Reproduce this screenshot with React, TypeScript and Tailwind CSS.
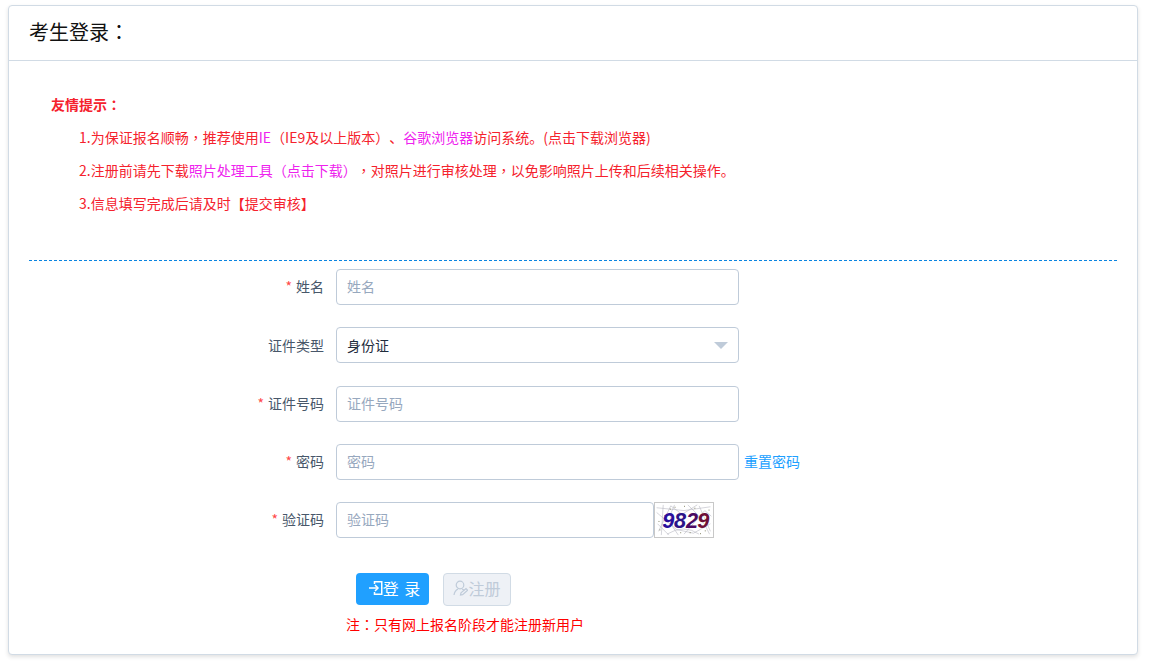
const font = { fontFamily: '"Noto Sans CJK SC", "Liberation Sans", sans-serif' };

// full-width punctuation sits centred in its cell in the original
function P({ children }: { children: string }) {
  return <span style={{ fontFamily: '"Noto Sans CJK TC", sans-serif' }}>{children}</span>;
}

function LoginIcon() {
  return (
    <svg className="h-4 w-3.5 shrink-0" viewBox="0 0 14 16" fill="none" stroke="currentColor" strokeWidth="1.5">
      <path d="M5.5 4 V1.75 H12.75 V14.25 H5.5 V12" />
      <path d="M0 8 H9" />
      <path d="M6 5 L9 8 L6 11" />
    </svg>
  );
}

function RegisterIcon() {
  return (
    <svg className="h-4 w-[15px] shrink-0" viewBox="0 0 15 16" fill="none" stroke="currentColor" strokeWidth="1.2">
      <circle cx="7" cy="5" r="3.8" />
      <path d="M1 15 C1.5 11.5 3 10 5 9" />
      <path d="M9 9 C10 9.4 10.8 9.8 11.4 10.4" />
      <path d="M7.5 15 L8 12.8 L13 8.6 L14.6 10.2 L9.6 14.6 Z" />
    </svg>
  );
}

function Captcha() {
  return (
    <svg className="block h-9 w-[60px] shrink-0 border border-[#c8c8c8]" viewBox="0 0 60 36">
      <rect width="60" height="36" fill="#ffffff" />
      <g stroke="#b4b4bf" strokeWidth="0.6" fill="none">
        <path d="M3 30 L16 3 L28 12 L44 2" />
        <path d="M1 10 L22 28 L40 32 L58 22" />
        <path d="M8 2 L6 34 M30 33 L52 8 L59 14" />
        <path d="M12 33 Q30 22 46 33" />
        <path d="M34 2 Q50 16 57 33" />
        <path d="M1 5 L30 8 L58 4" />
        <path d="M2 22 L14 34 M46 3 L58 30" />
        <path d="M20 2 Q10 18 24 34" />
      </g>
      <g fill="#7c7c5c">
        <rect x="4" y="28" width="1" height="1" />
        <rect x="15" y="6" width="1" height="1" />
        <rect x="26" y="31" width="1" height="1" />
        <rect x="41" y="5" width="1" height="1" />
        <rect x="52" y="29" width="1" height="1" />
        <rect x="9" y="13" width="1" height="1" />
        <rect x="56" y="7" width="1" height="1" />
        <rect x="36" y="31" width="1" height="1" />
        <rect x="20" y="4" width="1" height="1" />
        <rect x="47" y="32" width="1" height="1" />
        <rect x="3" y="19" width="1" height="1" />
        <rect x="30" y="3" width="1" height="1" />
      </g>
      <g fontFamily='"Liberation Sans", sans-serif' fontSize="23" fontWeight="700" fontStyle="italic">
        <text x="7" y="26.5" fill="#2a0f9c">9</text>
        <text x="19.5" y="26.5" fill="#2b1488">8</text>
        <text x="32" y="26.5" fill="#4a0a63">2</text>
        <text x="44" y="26.5" fill="#6d0f38">9</text>
      </g>
    </svg>
  );
}

function Field({
  label,
  required,
  children,
  className,
}: {
  label: string;
  required?: boolean;
  children: React.ReactNode;
  className: string;
}) {
  return (
    <div className={`flex items-center ${className}`}>
      <label className={`w-[307px] pr-3 text-right text-[14px] text-[#48576a] ${required ? "pb-0.5" : ""}`}>
        {required ? <span className="mr-1 text-[#ff4949]">*</span> : null}
        {label}
      </label>
      {children}
    </div>
  );
}

const inputClass =
  "h-9 rounded border border-[#bfcbd9] bg-white px-2.5 text-[14px] text-[#1f2d3d] outline-none placeholder:text-[#97a8be]";

export default function App() {
  return (
    <div className="min-h-[667px] bg-white pt-[5px] pr-3 pl-2 [text-spacing-trim:space-all]" style={font}>
      <div className="h-[650px] rounded border border-[#d1dbe5] bg-white shadow-[0_2px_4px_rgba(0,0,0,0.12)]">
        <div className="flex h-[55px] items-center border-b border-[#d1dbe5] px-5 pb-0.5 text-[20px] text-[#111111]">
          考生登录<P>：</P>
        </div>
        <div className="px-5">
          <div className="h-[200px] border-b border-dashed border-[#0a84e0] pt-[33px] pl-[22px] text-[14px] leading-[20px] text-[#f5222d]">
            <p className="font-bold">
              友情提示<P>：</P>
            </p>
            <p className="mt-[13px] pl-7">
              1.为保证报名顺畅<P>，</P>推荐使用<span className="text-[#ee22ee]">IE</span>
              <P>（</P>IE9及以上版本<P>）</P>、
              <span className="text-[#ee22ee]">谷歌浏览器</span>访问系统。(点击下载浏览器)
            </p>
            <p className="mt-[13px] pl-7">
              2.注册前请先下载
              <span className="text-[#ee22ee]">
                照片处理工具<P>（</P>点击下载<P>）</P>
              </span>
              <P>，</P>对照片进行审核处理<P>，</P>以免影响照片上传和后续相关操作。
            </p>
            <p className="mt-[13px] pl-7">3.信息填写完成后请及时【提交审核】</p>
          </div>
          <div className="pt-2">
            <Field label="姓名" required className="">
              <input className={`${inputClass} w-[403px] pb-0.5`} placeholder="姓名" />
            </Field>
            <Field label="证件类型" className="mt-[22px]">
              <div className={`${inputClass} flex w-[403px] items-center justify-between pr-2.5`}>
                <span>身份证</span>
                <span className="h-0 w-0 border-x-[7px] border-t-[7px] border-x-transparent border-t-[#bfcbd9]" />
              </div>
            </Field>
            <Field label="证件号码" required className="mt-[23px]">
              <input className={`${inputClass} w-[403px] pb-0.5`} placeholder="证件号码" />
            </Field>
            <Field label="密码" required className="mt-[22px]">
              <input className={`${inputClass} w-[403px] pb-0.5`} placeholder="密码" />
              <a className="ml-[5px] pb-0.5 text-[14px] text-[#20a0ff]">重置密码</a>
            </Field>
            <Field label="验证码" required className="mt-[22px]">
              <input className={`${inputClass} w-[318px] pb-0.5`} placeholder="验证码" />
              <Captcha />
            </Field>
          </div>
          <div className="mt-[35px] flex gap-3.5 pl-[327px]">
            <button className="flex h-8 w-[73px] items-center justify-center rounded bg-[#20a0ff] pb-0.5 pl-1 text-[16px] text-white [word-spacing:2px]">
              <LoginIcon />
              <span>登 录</span>
            </button>
            <button className="flex h-[33px] w-[68px] items-center justify-center rounded border border-[#d1dbe5] bg-[#eef1f6] pb-1 text-[16px] text-[#bfcbd9]">
              <RegisterIcon />
              <span>注册</span>
            </button>
          </div>
          <p className="mt-2 pl-[317px] text-[14px] leading-[20px] text-[#ff0000]">
            注<P>：</P>只有网上报名阶段才能注册新用户
          </p>
        </div>
      </div>
    </div>
  );
}
